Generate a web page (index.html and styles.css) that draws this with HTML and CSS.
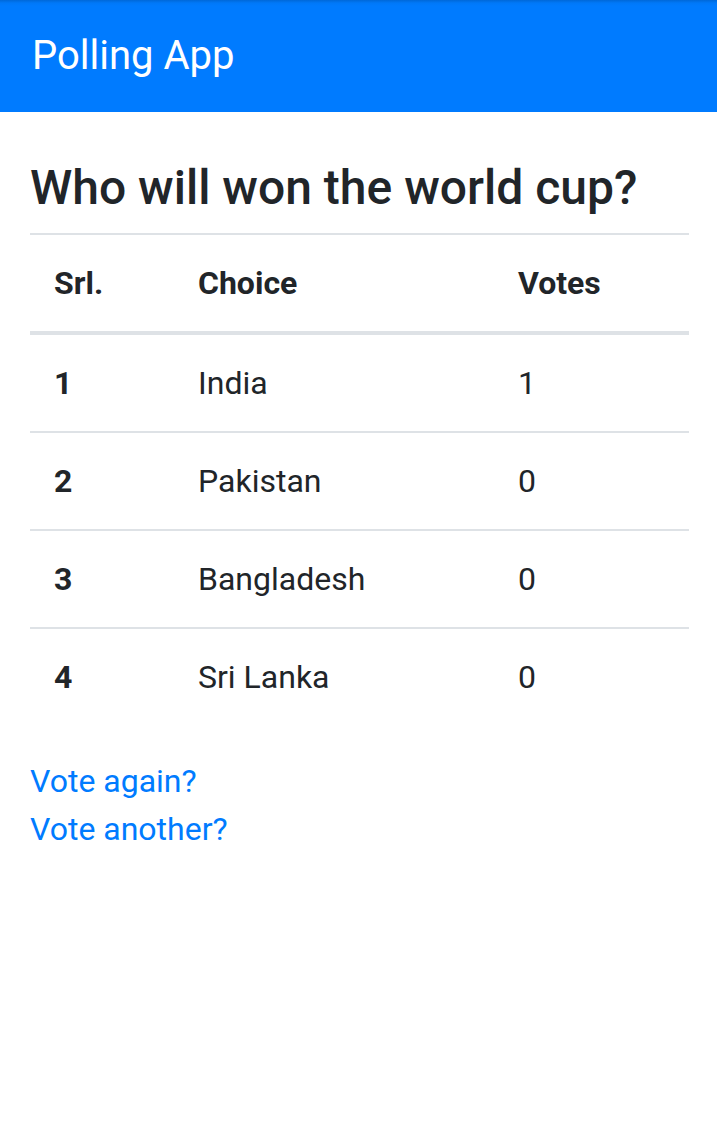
FILE: index.html
```html
<!DOCTYPE html>
<html lang="en">
<head>
<meta charset="utf-8">
<title>Polling App</title>
<link rel="stylesheet" href="styles.css">
</head>
<body>
<nav class="navbar">
  <a class="brand" href="#">Polling App</a>
</nav>
<main class="container">
  <h4 class="question">Who will won the world cup?</h4>
  <table class="results">
    <colgroup>
      <col class="c-srl"><col class="c-choice"><col class="c-votes">
    </colgroup>
    <thead>
      <tr><th>Srl.</th><th>Choice</th><th>Votes</th></tr>
    </thead>
    <tbody>
      <tr><th>1</th><td>India</td><td>1</td></tr>
      <tr><th>2</th><td>Pakistan</td><td>0</td></tr>
      <tr><th>3</th><td>Bangladesh</td><td>0</td></tr>
      <tr><th>4</th><td>Sri Lanka</td><td>0</td></tr>
    </tbody>
  </table>
  <div class="links">
    <a href="#">Vote again?</a>
    <a href="#">Vote another?</a>
  </div>
</main>
</body>
</html>
```

FILE: styles.css
```css
html, body {
  margin: 0;
  padding: 0;
}
body {
  font-family: Roboto, "Liberation Sans", sans-serif;
  font-size: 32px;
  line-height: 1.5;
  color: #212529;
  background: #fff;
}
.navbar {
  height: 112px;
  box-sizing: border-box;
  padding: 16px 32px;
  display: flex;
  align-items: center;
  background: linear-gradient(to bottom, #0068d8 0px, #0078f8 3px, #007bff 6px, #007bff 100%);
}
.brand {
  color: #fff;
  text-decoration: none;
  font-size: 40px;
  line-height: 60px;
  padding: 10px 0;
}
.container {
  padding: 47px 28px 0 30px;
}
.question {
  margin: 0 0 16px;
  font-size: 48px;
  font-weight: 500;
  line-height: 1.2;
}
.results {
  width: 100%;
  border-collapse: collapse;
  margin-bottom: 32px;
}
.c-srl { width: 144px; }
.c-choice { width: 320px; }
.results th, .results td {
  padding: 24px;
  text-align: left;
  vertical-align: top;
  border-top: 2px solid #dee2e6;
}
.results th {
  font-weight: 700;
}
.results td {
  font-weight: 400;
}
.results thead th {
  border-bottom: 4px solid #dee2e6;
}
.results tbody tr:first-child th,
.results tbody tr:first-child td {
  border-top: 0;
}
.links a {
  display: block;
  color: #007bff;
  text-decoration: none;
  line-height: 48px;
}
```
